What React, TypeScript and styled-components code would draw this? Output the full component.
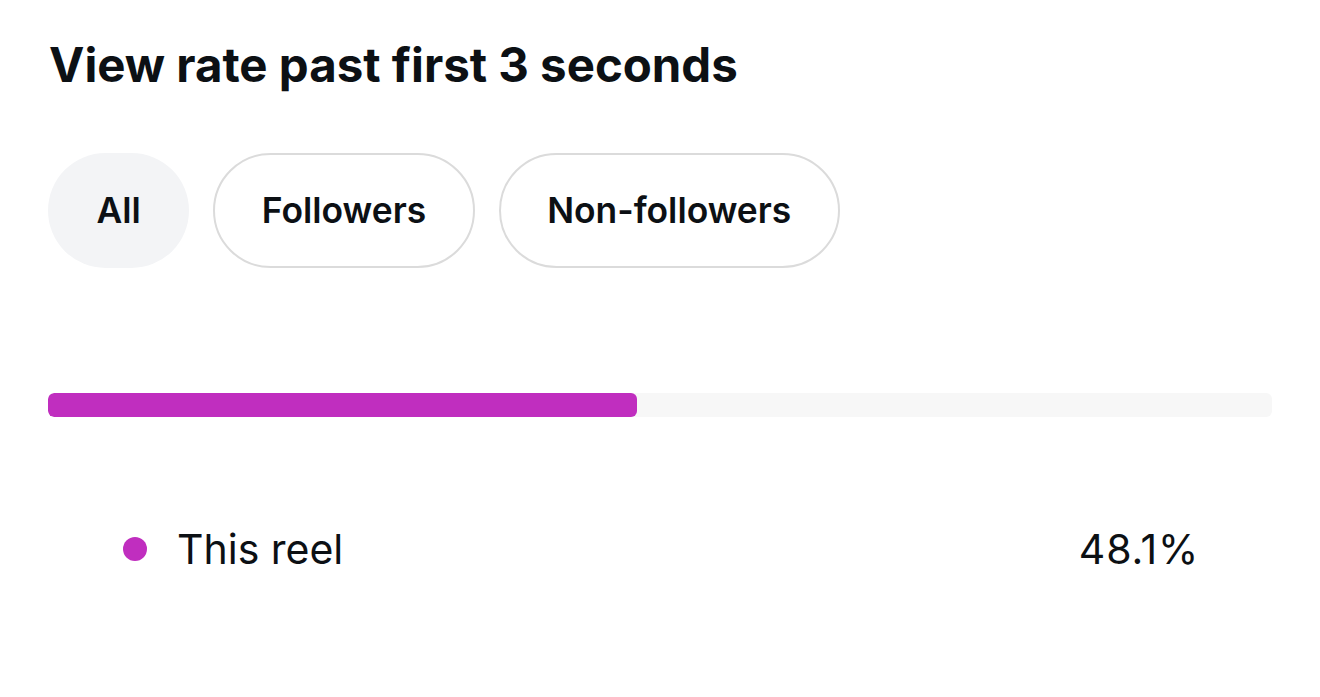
import React from "react";
import styled, { createGlobalStyle } from "styled-components";

const GlobalStyle = createGlobalStyle`
  html, body {
    margin: 0;
    padding: 0;
    background: #ffffff;
  }
  body {
    font-family: Inter, "Noto Sans", "Liberation Sans", sans-serif;
    color: #0c1014;
    -webkit-font-smoothing: antialiased;
  }
`;

const Card = styled.section`
  width: 1320px;
  height: 697px;
  box-sizing: border-box;
  padding: 37px 48px 0 48px;
  display: flex;
  flex-direction: column;
  background: #ffffff;
`;

const Title = styled.h1`
  margin: 0 0 0 1px;
  font-size: 47.4px;
  line-height: 56px;
  font-weight: 700;
  color: #0c1014;
`;

const Chips = styled.div`
  display: flex;
  gap: 24px;
  margin-top: 60px;
`;

const Chip = styled.button<{ $active?: boolean }>`
  height: 115px;
  box-sizing: border-box;
  padding: 0 46.5px;
  border-radius: 58px;
  border: 2px solid ${(p) => (p.$active ? "transparent" : "#dbdbdb")};
  background: ${(p) => (p.$active ? "#f3f4f6" : "#ffffff")};
  font-family: inherit;
  font-size: 35.4px;
  font-weight: 600;
  color: #0c1014;
  cursor: pointer;
`;

const Track = styled.div`
  margin-top: 125px;
  height: 24px;
  border-radius: 6px;
  background: #f7f7f7;
  overflow: hidden;
`;

const Fill = styled.div`
  height: 100%;
  border-radius: 6px;
  background: #c02ebf;
`;

const Legend = styled.div`
  margin-top: 107px;
  padding: 0 73px 0 75px;
  display: flex;
  align-items: center;
  justify-content: space-between;
`;

const LegendLabel = styled.div`
  display: flex;
  align-items: center;
  gap: 30px;
  font-size: 41px;
  font-weight: 400;
`;

const Dot = styled.span`
  width: 24px;
  height: 24px;
  border-radius: 50%;
  background: #c02ebf;
  flex-shrink: 0;
`;

const Value = styled.div`
  font-size: 41px;
  font-weight: 400;
  letter-spacing: 0.8px;
`;

const segments = ["All", "Followers", "Non-followers"];

export default function App() {
  const rate = 48.1;
  return (
    <>
      <GlobalStyle />
      <Card>
        <Title>View rate past first 3 seconds</Title>
        <Chips>
          {segments.map((s, i) => (
            <Chip key={s} $active={i === 0}>
              {s}
            </Chip>
          ))}
        </Chips>
        <Track>
          <Fill style={{ width: `${rate}%` }} />
        </Track>
        <Legend>
          <LegendLabel>
            <Dot />
            This reel
          </LegendLabel>
          <Value>{rate}%</Value>
        </Legend>
      </Card>
    </>
  );
}
